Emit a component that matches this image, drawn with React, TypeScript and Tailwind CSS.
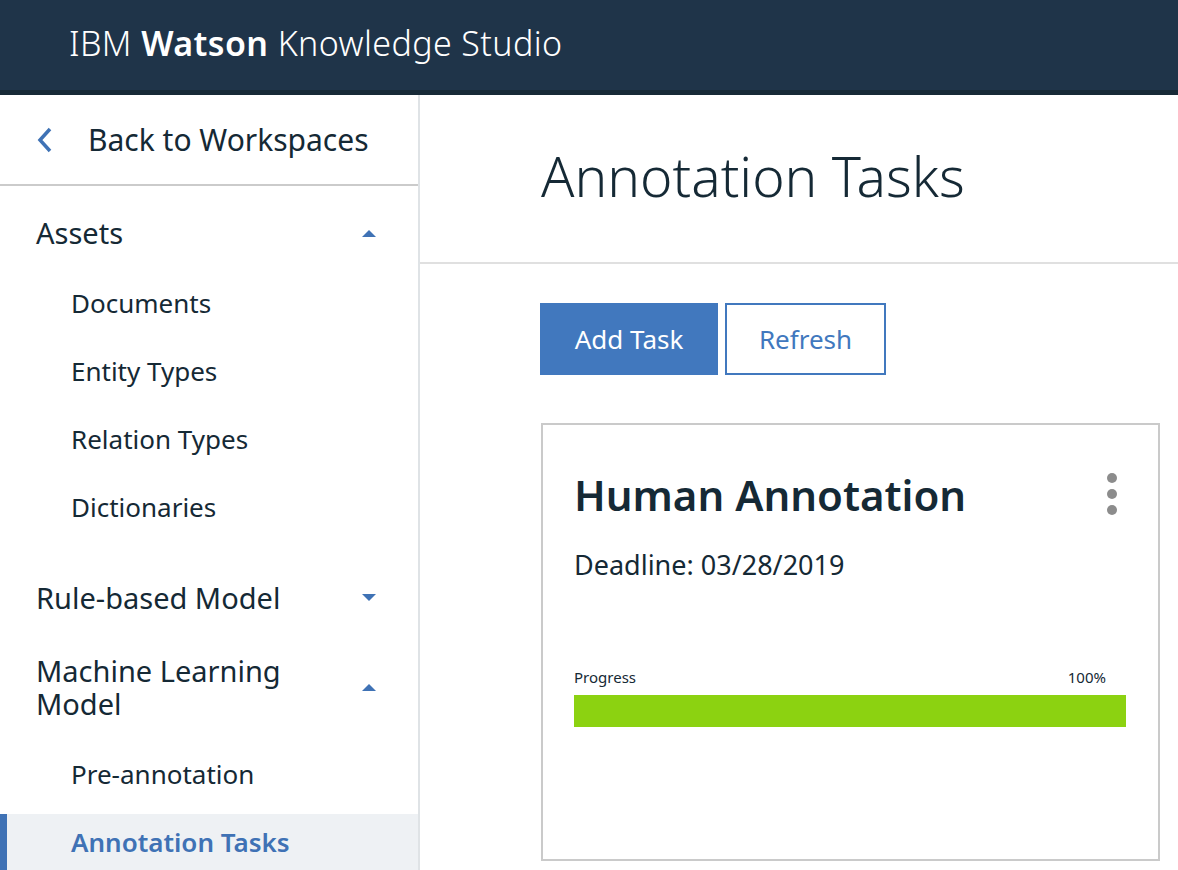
const font = { fontFamily: '"Noto Sans", "Open Sans", sans-serif' };

function Caret({ up }: { up: boolean }) {
  return (
    <svg width="14" height="8" viewBox="0 0 14 8" className="text-[#3f72b5]">
      {up ? (
        <polygon points="0,8 7,1 14,8" fill="currentColor" />
      ) : (
        <polygon points="0,0 7,7 14,0" fill="currentColor" />
      )}
    </svg>
  );
}

function BackChevron() {
  return (
    <svg width="18" height="26" viewBox="0 0 18 26" className="text-[#3f72b5]">
      <polyline
        points="14,2 4,13 14,24"
        fill="none"
        stroke="currentColor"
        strokeWidth="3.5"
        strokeLinejoin="miter"
      />
    </svg>
  );
}

function SubItem({ label, active }: { label: string; active?: boolean }) {
  if (active) {
    return (
      <div className="relative mt-[6px] h-[60px] flex items-center bg-[#eef1f4] pl-[71px] pb-[4px]">
        <div className="absolute left-0 top-0 bottom-0 w-[7px] bg-[#3f72b5]" />
        <span className="text-[26px] font-semibold text-[#3f72b5]">{label}</span>
      </div>
    );
  }
  return (
    <div className="h-[68px] flex items-center pl-[71px] text-[26px] text-[#152935]">
      {label}
    </div>
  );
}

function Section({ label, up }: { label: React.ReactNode; up: boolean }) {
  return (
    <div className="flex items-center justify-between pl-[36px] pr-[42px] text-[29px] leading-[33px] text-[#152935]">
      <span>{label}</span>
      <Caret up={up} />
    </div>
  );
}

export default function App() {
  return (
    <div className="w-[1178px] h-[870px] overflow-hidden bg-white flex flex-col" style={font}>
      <header className="h-[95px] shrink-0 bg-[#1f3449] border-b-[5px] border-[#172a37] flex items-center pl-[69px] pb-[3px]">
        <span className="text-[34px] text-white font-light tracking-[0.4px]">
          IBM <span className="font-semibold">Watson</span> Knowledge Studio
        </span>
      </header>
      <div className="flex flex-1 min-h-0">
        <aside className="w-[420px] shrink-0 border-r-2 border-[#dfe3e6] flex flex-col">
          <div className="h-[91px] shrink-0 border-b-2 border-[#cbcbcb] flex items-center pl-[36px] gap-[34px]">
            <BackChevron />
            <span className="text-[30px] text-[#152935]">Back to Workspaces</span>
          </div>
          <div className="pt-[30px]">
            <Section label="Assets" up />
          </div>
          <div className="mt-[20px]">
            <SubItem label="Documents" />
            <SubItem label="Entity Types" />
            <SubItem label="Relation Types" />
            <SubItem label="Dictionaries" />
          </div>
          <div className="mt-[40px]">
            <Section label="Rule-based Model" up={false} />
          </div>
          <div className="mt-[40px]">
            <Section
              label={
                <>
                  Machine Learning
                  <br />
                  Model
                </>
              }
              up
            />
          </div>
          <div className="mt-[20px]">
            <SubItem label="Pre-annotation" />
            <SubItem label="Annotation Tasks" active />
          </div>
        </aside>
        <main className="flex-1 flex flex-col">
          <div className="h-[169px] shrink-0 border-b-2 border-[#e0e0e0] flex items-center pl-[121px]">
            <h1 className="text-[55px] font-light text-[#152935] -mt-[5px]">Annotation Tasks</h1>
          </div>
          <div className="pl-[120px] pt-[39px] flex flex-col">
            <div className="flex gap-[7px]">
              <button className="w-[178px] h-[72px] bg-[#4178be] text-white text-[26px]">Add Task</button>
              <button className="w-[161px] h-[72px] border-2 border-[#4178be] text-[#4178be] text-[26px]">
                Refresh
              </button>
            </div>
            <div className="mt-[48px] ml-[1px] w-[619px] h-[438px] border-2 border-[#cacaca] pl-[31px] pr-[32px] pt-[43px] flex flex-col">
              <div className="flex items-start justify-between">
                <h2 className="text-[42px] leading-[54px] font-semibold text-[#152935]">Human Annotation</h2>
                <div className="flex flex-col gap-[6px] mt-[5px] mr-[9px]">
                  <span className="w-[10px] h-[10px] rounded-full bg-[#8c8c8c]" />
                  <span className="w-[10px] h-[10px] rounded-full bg-[#8c8c8c]" />
                  <span className="w-[10px] h-[10px] rounded-full bg-[#8c8c8c]" />
                </div>
              </div>
              <div className="mt-[23px] text-[27px] text-[#152935]">Deadline: 03/28/2019</div>
              <div className="mt-[80px] flex justify-between text-[15px] text-[#152935] pr-[20px]">
                <span>Progress</span>
                <span>100%</span>
              </div>
              <div className="mt-[7px] h-[32px] w-[552px] bg-[#8cd211]" />
            </div>
          </div>
        </main>
      </div>
    </div>
  );
}
